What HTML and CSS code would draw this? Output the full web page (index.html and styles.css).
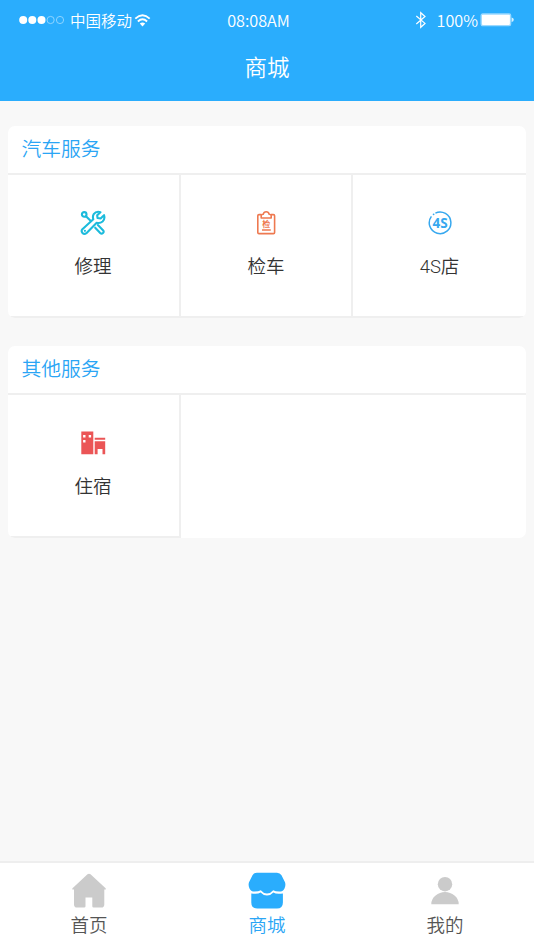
FILE: index.html
```
<!DOCTYPE html>
<html lang="zh-CN">
<head>
    <meta charset="UTF-8">
    <meta name="viewport" content="width=device-width, initial-scale=1">
    <title>商城</title>
    <link rel="stylesheet" href="styles.css">
</head>
<body>
    <div class="header">
        <div class="status">
            <div class="status__left">
                <svg class="status__signal" width="46" height="10" viewBox="0 0 46 10">
                    <g fill="#fff">
                        <circle cx="4.2" cy="5" r="4"/>
                        <circle cx="13.3" cy="5" r="4"/>
                        <circle cx="22.5" cy="5" r="4"/>
                    </g>
                    <g fill="none" stroke="#a6ddff" stroke-width=".8">
                        <circle cx="31.6" cy="5" r="3.6"/>
                        <circle cx="41" cy="5" r="3.6"/>
                    </g>
                </svg>
                <span class="status__carrier">中国移动</span>
                <svg class="status__wifi" width="17" height="13" viewBox="0 0 16 13">
                    <g fill="none" stroke="#fff" stroke-width="1.9">
                        <path d="M.8 4.6Q8-2.2 15.2 4.6"/>
                        <path d="M3.4 7.5Q8 3.2 12.6 7.5"/>
                    </g>
                    <path d="M8 12.6L5.3 9.6Q8 7.4 10.7 9.6z" fill="#fff"/>
                </svg>
            </div>
            <div class="status__time">08:08AM</div>
            <div class="status__right">
                <svg width="12" height="18" viewBox="0 0 12 18">
                    <path d="M1.3 5L10 12.4 5.7 16.3V1.7L10 5.5 1.3 13" fill="none" stroke="#fff" stroke-width="1.2"/>
                </svg>
                <span class="status__percent">100%</span>
                <svg class="status__battery" width="34" height="14" viewBox="0 0 34 14">
                    <rect x="1.2" y="1" width="29.4" height="11.6" rx="1.5" fill="#fff" stroke="#9bd9ff" stroke-width="1.4"/>
                    <path d="M31.6 4.5q2.2.5 2.2 2.3t-2.2 2.3z" fill="#d5f0ff"/>
                </svg>
            </div>
        </div>
        <h1 class="header__title">商城</h1>
    </div>

    <div class="content">
        <div class="card">
            <h2 class="card__title">汽车服务</h2>
            <div class="card__grid">
                <div class="card__item">
                    <svg class="card__icon" width="26" height="26" viewBox="0 0 26 26">
                        <g fill="none" stroke="#1cbbdc" stroke-width="2.1" stroke-linejoin="round" stroke-linecap="round">
                            <circle cx="4.2" cy="4.4" r="2.3"/>
                            <path d="M6 6.2L10.8 11"/>
                            <path d="M15.2 17.7L20.2 23Q21.6 24.3 23 23T23 20.2L17.9 15.1"/>
                            <path d="M20.4 2.2Q16.2.8 13.7 4.2 12.4 6.4 13.3 9.2L2.4 19.2Q.8 21.2 2.5 23T6.4 23.2L16.7 12.7Q20 13.6 22.6 11.5 25.3 9 24 5.2L20.6 8.5 17.5 8 17.2 5.3z"/>
                        </g>
                        <circle cx="4.9" cy="20.8" r="1.1" fill="#1cbbdc"/>
                    </svg>
                    <span class="card__label">修理</span>
                </div>
                <div class="card__item">
                    <svg class="card__icon" width="26" height="26" viewBox="0 0 26 26">
                        <g fill="none" stroke="#ee7950" stroke-width="1.6" stroke-linejoin="round">
                            <path d="M8.6 4.6H6Q4.8 4.6 4.8 5.8V22.4Q4.8 23.6 6 23.6H20.4Q21.6 23.6 21.6 22.4V5.8Q21.6 4.6 20.4 4.6H17.8"/>
                            <path d="M8.2 8V5.6Q8.2 4.4 10.2 4.2 10.8 1.7 13.2 1.7T16.2 4.2Q18.2 4.4 18.2 5.6V8z"/>
                            <path d="M9 20H17.8" stroke-width="1.5"/>
                        </g>
                        <text class="card__stamp" x="13.3" y="17">检</text>
                    </svg>
                    <span class="card__label">检车</span>
                </div>
                <div class="card__item">
                    <svg class="card__icon" width="26" height="26" viewBox="0 0 26 26">
                        <path d="M8.4 3.1A10.8 10.8 0 1 1 4.4 6.4" fill="none" stroke="#37a8ef" stroke-width="1.5"/>
                        <circle cx="6.6" cy="4.3" r=".9" fill="#37a8ef"/>
                        <text class="card__mark" x="13.2" y="17.8">4S</text>
                    </svg>
                    <span class="card__label">4S店</span>
                </div>
            </div>
        </div>

        <div class="card">
            <h2 class="card__title">其他服务</h2>
            <div class="card__grid">
                <div class="card__item">
                    <svg class="card__icon" width="26" height="26" viewBox="0 0 26 26">
                        <path d="M1.3 1.5H13.3V24.3H1.3z" fill="#eb5556"/>
                        <path d="M14.7 7.8H25.2V9.7H14.7zM14.7 11.2H25.2V24.3H22.5V19H17.6V24.3H14.7z" fill="#eb5556"/>
                        <path d="M3.1 5H5.5V7.4H3.1zM8.7 5H11.1V7.4H8.7zM3.1 10H5.5V12.4H3.1z" fill="#fff"/>
                    </svg>
                    <span class="card__label">住宿</span>
                </div>
            </div>
        </div>
    </div>

    <div class="tabbar">
        <div class="tabbar__item">
            <svg width="38" height="38" viewBox="0 0 38 38">
                <path d="M19 1.7q.8 0 1.5.6L35.6 16.2q1 1.3-.4 1.3H34.3V32.5Q34.3 35.6 31.3 35.6H23.6Q22.3 35.6 22.3 34.3V25.5H15.5V34.3Q15.5 35.6 14.2 35.6H7Q4 35.6 4 32.5V17.5H2.9q-1.4 0-.4-1.3L17.5 2.3Q18.2 1.7 19 1.7z" fill="#cbcbcb"/>
            </svg>
            <span class="tabbar__label">首页</span>
        </div>
        <div class="tabbar__item tabbar__item--active">
            <svg width="38" height="38" viewBox="0 0 38 38">
                <g fill="#2aadfd">
                    <path d="M9 .7H29Q32 .7 33.5 3.3L37 10.2Q38 13.5 36.5 16.4 34.8 19.6 31.4 19.6 27.3 19.4 25.2 18.2 22.6 21.4 19 21.6 15.4 21.4 12.8 18.2 10.5 19.4 6.6 19.6 3.2 19.6 1.5 16.4 0 13.5 1 10.2L4.5 3.3Q6 .7 9 .7z"/>
                    <path d="M3.3 21.4Q9.7 22.6 12.6 20.4 15.3 23.4 19 23.4T25.4 20.4Q28.3 22.6 34.9 21.4V30.5Q34.9 36.5 28.9 36.5H9.3Q3.3 36.5 3.3 30.5z"/>
                </g>
            </svg>
            <span class="tabbar__label">商城</span>
        </div>
        <div class="tabbar__item">
            <svg width="38" height="38" viewBox="0 0 38 38">
                <g fill="#cbcbcb">
                    <circle cx="19" cy="12.2" r="7.2"/>
                    <path d="M5.3 32.2Q5.2 27 9.6 23.5 13.7 20 19 20T28.5 23.5Q32.8 27 32.7 32.2z"/>
                </g>
            </svg>
            <span class="tabbar__label">我的</span>
        </div>
    </div>
</body>
</html>
```

FILE: styles.css
```
* {
    box-sizing: border-box;
}

body {
    background-color: #f8f8f8;
    color: #333333;
    font-family: "Noto Sans CJK SC", sans-serif;
    font-weight: 350;
    margin: 0;
    display: flex;
    flex-direction: column;
    height: 100vh;
}

.header {
    background-color: #2aadfd;
    color: #ffffff;
    height: 101px;
}

.status {
    display: grid;
    grid-template-columns: 1fr auto 1fr;
    align-items: center;
    height: 40px;
    padding: 0 20px 0 19px;
    font-size: 16.2px;
    line-height: 20px;
}

.status__left,
.status__right {
    display: flex;
    align-items: center;
}

.status__carrier {
    margin: 0 2px 0 5px;
    font-size: 15.5px;
}

.status__time {
    margin-right: 16px;
}

.status__right {
    justify-content: flex-end;
}

.status__percent {
    margin: 0 2px 0 10px;
}

.header__title {
    margin: 9px 0 0;
    font-size: 22.5px;
    font-weight: 350;
    line-height: 34px;
    text-align: center;
}

.content {
    flex: 1;
    display: flex;
    flex-direction: column;
    gap: 28px;
    padding: 25px 8px 0;
}

.card {
    background-color: #ffffff;
    border-radius: 7px;
    height: 192px;
    overflow: hidden;
}

.card__title {
    margin: 0;
    height: 49px;
    padding-left: 13.5px;
    border-bottom: 2px solid #efefef;
    color: #2aa5f5;
    font-size: 19.8px;
    font-weight: 350;
    line-height: 44px;
}

.card__grid {
    display: grid;
    grid-template-columns: 173px 172px 173px;
    height: 143px;
}

.card__item {
    display: flex;
    flex-direction: column;
    align-items: center;
    padding-top: 35px;
    border-right: 2px solid #efefef;
    border-bottom: 2px solid #efefef;
}

.card__item:first-child {
    padding-right: 1px;
}

.card__item:nth-child(3) {
    border-right: none;
}

.card__label {
    margin-top: 17px;
    font-family: Roboto, "Noto Sans CJK SC", sans-serif;
    font-size: 18.5px;
    font-weight: 350;
    line-height: 28px;
}

.card__stamp {
    fill: #ee7950;
    font-size: 8px;
    font-weight: 700;
    text-anchor: middle;
}

.card__mark {
    fill: #37a8ef;
    font-family: "Open Sans", sans-serif;
    font-size: 13.5px;
    font-weight: 700;
    text-anchor: middle;
}

.tabbar {
    display: flex;
    height: 89px;
    background-color: #ffffff;
    border-top: 2px solid #eeeeee;
}

.tabbar__item {
    flex: 1;
    display: flex;
    flex-direction: column;
    align-items: center;
    padding-top: 9px;
    color: #555555;
}

.tabbar__item--active {
    color: #2aa5f5;
}

.tabbar__label {
    font-size: 18.5px;
    font-weight: 350;
    line-height: 28px;
}
```
